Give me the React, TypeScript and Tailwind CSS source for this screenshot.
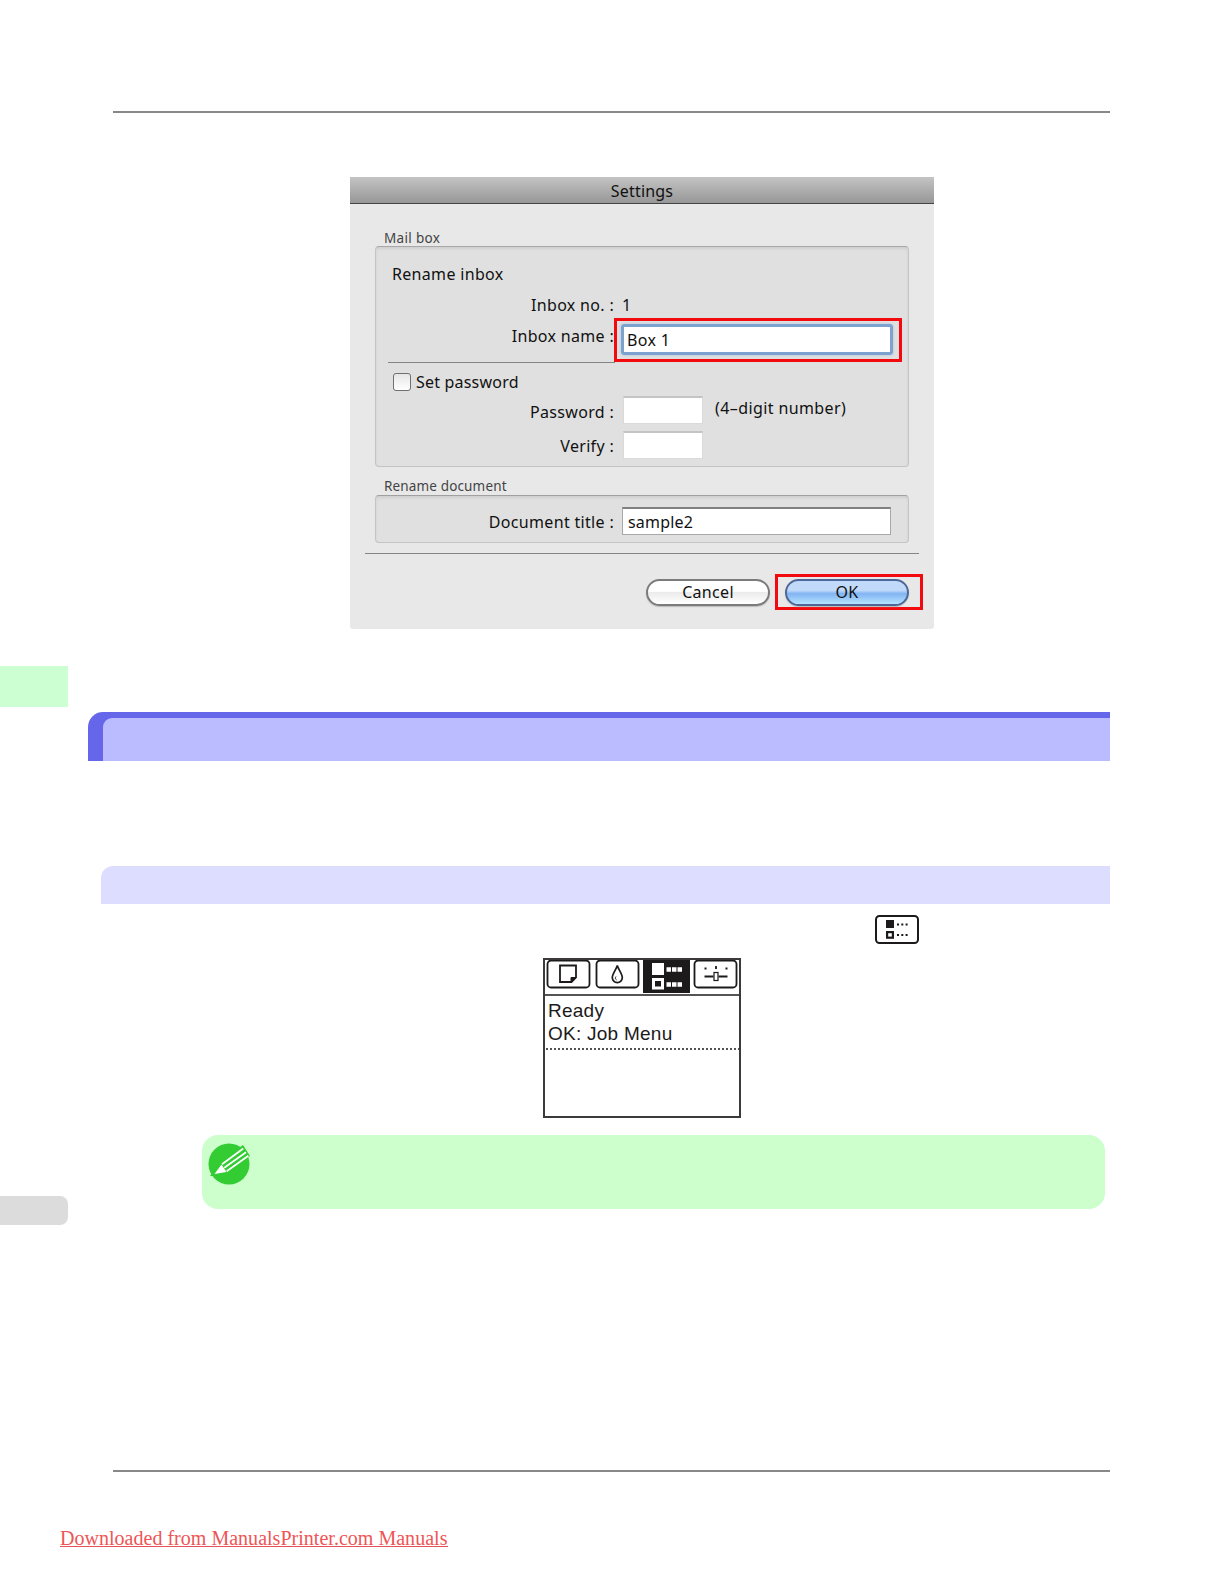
import type { ReactNode } from 'react';

function Label({ children, className }: { children: ReactNode; className: string }) {
  return <span className={`block h-[24px] whitespace-nowrap leading-[24px] ${className}`}>{children}</span>;
}

function JobListGlyph() {
  return (
    <svg className="block" fill="none" height="29" viewBox="0 0 44 29" width="44">
      <rect height="27" rx="3.5" stroke="#1c1a1b" strokeWidth="2" width="42" x="1" y="1" />
      <rect fill="#1c1a1b" height="8" width="8" x="11" y="5" />
      <rect height="5.6" stroke="#1c1a1b" strokeWidth="2.2" width="5.8" x="12.1" y="17.1" />
      <path d="M22 9.5h2m2.3 0h2m2.3 0h2M22 20h2m2.3 0h2m2.3 0h2" stroke="#1c1a1b" strokeWidth="1.8" />
    </svg>
  );
}

function SettingsDialog() {
  return (
    <div className="ml-[350px] mt-[64px] h-[452px] w-[584px] rounded-b-[3px] bg-[#e8e8e8] font-['Noto_Sans',sans-serif] text-[16px] tracking-[0.32px] text-[#111111]">
      <div className="h-[27px] border-b border-b-[#444444] bg-linear-to-b from-[#c4c4c4] to-[#979797] text-center leading-[28px] tracking-[0.2px]">
        Settings
      </div>
      <Label className="ml-[34px] mt-[22px] text-[13.5px] text-[#444444]">Mail box</Label>
      <div className="ml-[25px] mt-[-4px] h-[221px] w-[534px] rounded-[4px] border border-[#c4c4c4] border-t-[#a8a8a8] bg-[#e0e0e0] shadow-[inset_0_2px_3px_#cfcfcf]">
        <Label className="ml-[16px] mt-[15px]">Rename inbox</Label>
        <div className="mt-[7px] flex">
          <Label className="w-[238px] text-right">Inbox no. :</Label>
          <Label className="ml-[8px]">1</Label>
        </div>
        <div className="mt-[1px] flex h-[44px]">
          <Label className="mt-[6px] w-[238px] text-right">Inbox name :</Label>
          <div className="h-[44px] w-[288px] border-[3px] border-[#f20a0e] p-[4px] pt-[3px]">
            <div className="h-[31px] w-[272px] rounded-[3px] bg-white pl-[6px] leading-[32px] shadow-[inset_0_0_0_3px_#7da2cf,0_0_3px_#a9c0dd]">
              Box 1
            </div>
          </div>
        </div>
        <div className="ml-[12px] h-px w-[227px] bg-[#858585]" />
        <div className="mt-[7px] flex">
          <div className="ml-[17px] mt-[3px] h-[18px] w-[18px] rounded-[3px] border border-[#707070] bg-linear-to-b from-[#e6e6e6] to-white" />
          <Label className="ml-[5px] tracking-[0.2px]">Set password</Label>
        </div>
        <div className="mt-[2px] flex h-[28px]">
          <Label className="mt-[4px] w-[238px] text-right">Password :</Label>
          <div className="ml-[9px] h-[28px] w-[80px] border border-t-2 border-[#dadada] border-t-[#c4c4c4] bg-white" />
          <Label className="ml-[12px] tracking-[0.4px]">(4–digit number)</Label>
        </div>
        <div className="mt-[7px] flex h-[28px]">
          <Label className="mt-[3px] w-[238px] text-right">Verify :</Label>
          <div className="ml-[9px] h-[28px] w-[80px] border border-t-2 border-[#dadada] border-t-[#c4c4c4] bg-white" />
        </div>
      </div>
      <Label className="ml-[34px] mt-[7px] text-[13.5px] tracking-[0.15px] text-[#444444]">Rename document</Label>
      <div className="ml-[25px] mt-[-3px] flex h-[48px] w-[534px] rounded-[4px] border border-[#c4c4c4] border-t-[#a0a0a0] bg-[#e0e0e0] shadow-[inset_0_2px_3px_#cfcfcf]">
        <Label className="mt-[14px] w-[238px] text-right">Document title :</Label>
        <div className="ml-[8px] mt-[11px] h-[28px] w-[269px] border border-t-2 border-[#a8a8a8] border-t-[#808080] bg-white pl-[5px] leading-[26px] tracking-[0.2px]">
          sample2
        </div>
      </div>
      <div className="ml-[15px] mt-[10px] h-px w-[554px] bg-[#858585]" />
      <div className="flex">
        <button
          className="ml-[296px] mt-[25px] h-[27px] w-[124px] rounded-full border-2 border-[#7b7b7b] bg-linear-to-b from-white from-45% via-[#ebebeb] via-50% to-white pb-px leading-[22px] shadow-[0_1px_1px_#bbbbbb]"
          type="button"
        >
          Cancel
        </button>
        <div className="ml-[5px] mt-[20px] h-[36px] w-[148px] border-[3px] border-[#f20a0e] pl-[7px] pt-[2px]">
          <button
            className="block h-[27px] w-[124px] rounded-full border-2 border-[#4d6898] bg-linear-to-b from-[#c2dafa] from-40% via-[#82b4f2] via-55% to-[#b5e2ff] pb-px leading-[22px] shadow-[0_1px_1px_#bbbbbb]"
            type="button"
          >
            OK
          </button>
        </div>
      </div>
    </div>
  );
}

function PrinterDisplay() {
  return (
    <div className="ml-[543px] mt-[14px] h-[160px] w-[198px] border-2 border-[#3c3a3b] font-['Liberation_Sans',sans-serif] text-[19px] leading-[23px] tracking-[0.25px] text-[#1c1a1b]">
      <svg className="block" fill="none" height="36" stroke="#1c1a1b" viewBox="1 1 194 36" width="194">
        <path d="M0 36h196" strokeWidth="1.6" />
        <g strokeWidth="1.8">
          <rect height="27" rx="3.5" width="42" x="3.5" y="1.5" />
          <rect height="27" rx="3.5" width="42" x="52.5" y="1.5" />
          <rect height="27" rx="3.5" width="42" x="150.5" y="1.5" />
        </g>
        <path d="M16 6.5h16v12l-4.5 4.5H16z" strokeWidth="1.8" />
        <path d="M32 18.5h-5v5z" fill="#1c1a1b" strokeWidth="1" />
        <path d="M73.3 6.5c-1 4-5 8.5-5 12a5 5.2 0 0 0 10 0c0-3.5-4-8-5-12z" strokeWidth="1.7" />
        <path d="M72 17.5c-1 1.5-.8 2.5.6 3.5" strokeWidth="1" />
        <path d="M99 0h47v34H99z" fill="#1c1a1b" stroke="none" />
        <path d="M108 4h12v12h-12z" fill="white" stroke="none" />
        <path d="M109.5 20.5h9v8.5h-9z" stroke="white" strokeWidth="3" />
        <path
          d="M122.5 10.5h4.5m1 0h4.5m1 0h4.5m-15.5 15h4.5m1 0h4.5m1 0h4.5"
          stroke="white"
          strokeWidth="4.5"
        />
        <path d="M160.5 17.5h9m5 0h9" strokeWidth="1.8" />
        <rect height="8" strokeWidth="1.2" width="4" x="170" y="13.5" />
        <path d="M160.5 9.5h2m9.5-2.5v3m9.5-.5h2" strokeWidth="1.8" />
      </svg>
      <div className="ml-[3px] mt-[3px] whitespace-nowrap">
        Ready
        <br />
        OK: Job Menu
      </div>
      <svg className="mt-[3px] block" height="2" viewBox="0 0 194 2" width="194">
        <path d="M1 1h193" stroke="#1c1a1b" strokeDasharray="2 2" strokeWidth="1.6" />
      </svg>
    </div>
  );
}

function NotePencil() {
  return (
    <svg className="ml-[5px] mt-[6px] block" height="46" viewBox="0 0 46 46" width="46">
      <circle cx="22" cy="23" fill="#33cc33" r="20.5" />
      <path d="M3 35l11-15L36 4l7 11-25 18-13 2z" fill="#33cc33" />
      <path d="M7.5 33l7-9.5 5 7.5z" fill="white" />
      <path d="M15 23.3L36.3 7.5M17.3 26.8l21.7-15.500M19.7 30.3l21.700-15.500" stroke="white" strokeWidth="1.7" />
    </svg>
  );
}

export default function App() {
  return (
    <main className="flow-root h-[1584px] w-[1224px] overflow-hidden bg-white">
      <div className="ml-[113px] mt-[111px] h-[2px] w-[997px] bg-[#888888]" />
      <SettingsDialog />
      <div className="mt-[37px] h-[41px] w-[68px] bg-[#ccffd2]" />
      <div className="ml-[88px] mt-[5px] h-[49px] w-[1022px] rounded-tl-[15px] bg-[#6666ea] pl-[15px] pt-[6px]">
        <div className="h-[43px] rounded-tl-[9px] bg-[#bbbbff]" />
      </div>
      <div className="ml-[101px] mt-[105px] h-[38px] w-[1009px] rounded-tl-[12px] bg-[#ddddff]" />
      <div className="ml-[875px] mt-[11px]">
        <JobListGlyph />
      </div>
      <PrinterDisplay />
      <div className="mt-[17px] flex">
        <div className="mt-[61px] h-[29px] w-[68px] rounded-r-[8px] bg-[#dcdcdc]" />
        <div className="ml-[134px] h-[74px] w-[903px] rounded-[16px] bg-[#ccffcc]">
          <NotePencil />
        </div>
      </div>
      <div className="ml-[113px] mt-[245px] h-[2px] w-[997px] bg-[#888888]" />
      <a
        className="ml-[60px] mt-[56px] block h-[19px] w-[388px] whitespace-nowrap border-b border-[#e4525a] font-['Liberation_Serif',serif] text-[20px] leading-[20px] tracking-[0.02px] text-[#ee5555]"
        href="#manuals"
      >
        Downloaded from ManualsPrinter.com Manuals
      </a>
    </main>
  );
}
